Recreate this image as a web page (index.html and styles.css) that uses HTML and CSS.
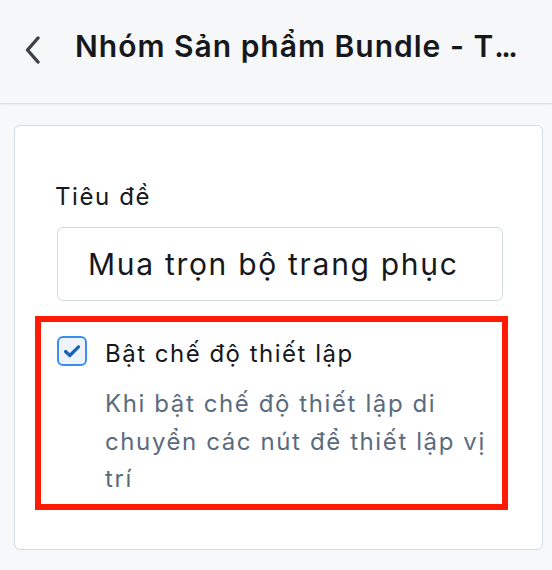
FILE: index.html
```html
<!DOCTYPE html>
<html lang="vi">
<head>
  <meta charset="UTF-8" />
  <meta name="viewport" content="width=device-width, initial-scale=1.0"/>
  <title>Nhóm Sản phẩm Bundle</title>
  <link rel="stylesheet" href="styles.css">
</head>
<body>

<!-- Top bar -->
<header class="topbar">
  <button class="btn-back" aria-label="Quay lại">
    <svg width="16" height="28" viewBox="0 0 16 28">
      <polyline points="13,2 2.5,14 13,26" fill="none" stroke="#3a414c" stroke-width="3.4" stroke-linecap="round" stroke-linejoin="round"/>
    </svg>
  </button>
  <h1 class="topbar-title">Nhóm Sản phẩm Bundle - T<span class="dots">...</span></h1>
</header>

<main class="content">
  <div class="card">

    <!-- Title field -->
    <div class="field">
      <label for="title">Tiêu đề</label>
      <input type="text" id="title" name="title" value="Mua trọn bộ trang phục" />
    </div>

    <!-- Setup mode toggle -->
    <div class="highlight">
      <label class="check-row">
        <span class="check-box">
          <svg width="18" height="14" viewBox="0 0 18 14">
            <polyline points="2.5,7.5 6.8,11.5 15.5,2.8" fill="none" stroke="#1763b5" stroke-width="3.2" stroke-linecap="round" stroke-linejoin="round"/>
          </svg>
        </span>
        <span class="check-text">
          <span class="check-label">Bật chế độ thiết lập</span>
          <span class="check-help">Khi bật chế độ thiết lập di chuyển các nút để thiết lập vị trí</span>
        </span>
      </label>
    </div>

  </div>
</main>

</body>
</html>
```

FILE: styles.css
```css
body {
  font-family: Inter, "Noto Sans", sans-serif;
  background-color: #f6f8fa;
  margin: 0;
  color: #16181c;
}

.topbar {
  display: flex;
  align-items: flex-start;
  box-sizing: border-box;
  height: 104px;
  padding: 28px 0 0 25px;
  background: #f6f7f9;
  border-bottom: 1px solid #dcdfe3;
  box-shadow: 0 1px 2px rgba(0,0,0,0.05);
}

.btn-back {
  display: flex;
  padding: 0;
  margin: 8px 34px 0 0;
  border: none;
  background: none;
  cursor: pointer;
}

.topbar-title {
  margin: 0;
  font-size: 30px;
  font-weight: 600;
  line-height: 36px;
  letter-spacing: 1px;
  color: #16181c;
  white-space: nowrap;
}

.topbar-title .dots {
  letter-spacing: -2.5px;
}

.content {
  padding: 21px 9px 20px 14px;
}

.card {
  background: white;
  border: 1.5px solid #d3dbe3;
  border-radius: 6px;
  padding: 56px 40px 39px 40px;
}

.field label {
  display: block;
  font-size: 24px;
  line-height: 29px;
  letter-spacing: 1.6px;
  margin-bottom: 16px;
  color: #16181c;
}

.field input {
  display: block;
  box-sizing: border-box;
  width: 446px;
  height: 74px;
  margin-left: 2px;
  padding: 0 30px;
  border: 1.5px solid #d3dbe3;
  border-radius: 6px;
  font-family: inherit;
  font-size: 30px;
  letter-spacing: 1.7px;
  color: #16181c;
  outline: none;
}

.highlight {
  box-sizing: border-box;
  margin: 15px 0 0 -20px;
  width: 473px;
  border: 6.5px solid #ff1a05;
  padding: 14px 6px 6px 16px;
}

.check-row {
  display: flex;
  align-items: flex-start;
  gap: 18px;
  cursor: pointer;
}

.check-box {
  flex: none;
  display: flex;
  align-items: center;
  justify-content: center;
  box-sizing: border-box;
  width: 30px;
  height: 30px;
  border: 2px solid #3a8ef0;
  border-radius: 6px;
  background: #eef3f9;
}

.check-text {
  display: flex;
  flex-direction: column;
  gap: 17px;
  padding-top: 3px;
}

.check-label {
  font-size: 24px;
  line-height: 29px;
  letter-spacing: 1.5px;
  color: #16181c;
}

.check-help {
  font-size: 24px;
  line-height: 37.5px;
  letter-spacing: 1.6px;
  color: #5b6b7e;
}
```
